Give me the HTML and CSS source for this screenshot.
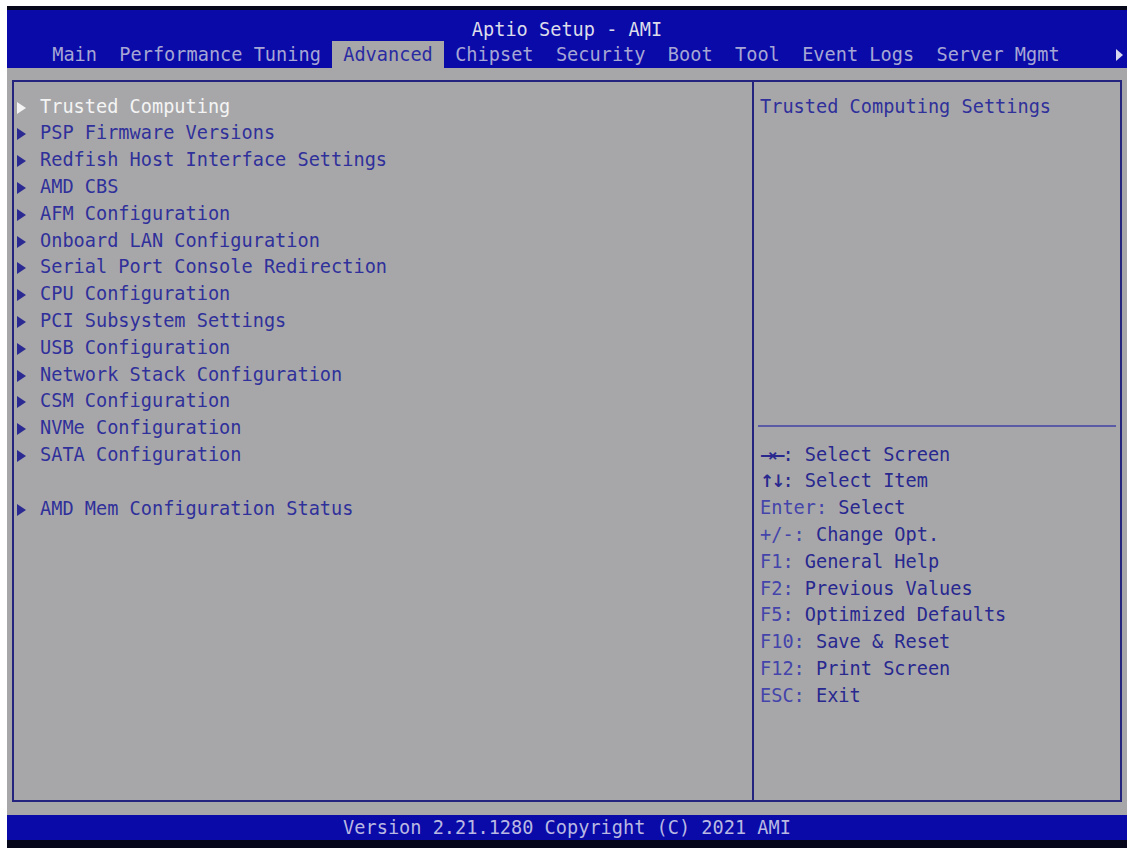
FILE: index.html
```html
<!DOCTYPE html>
<html>
<head>
    <meta charset="UTF-8">
    <title>Aptio Setup - AMI</title>
    <link rel="stylesheet" href="styles.css">
</head>
<body>
<div class="screen">
    <div class="topbar">
        <div class="title">Aptio Setup - AMI</div>
        <div class="tabs">
            <span class="tab">Main</span>
            <span class="tab">Performance Tuning</span>
            <span class="tab active">Advanced</span>
            <span class="tab">Chipset</span>
            <span class="tab">Security</span>
            <span class="tab">Boot</span>
            <span class="tab">Tool</span>
            <span class="tab">Event Logs</span>
            <span class="tab">Server Mgmt</span>
            <span class="more"></span>
        </div>
    </div>
    <div class="content">
        <div class="panel">
            <ul class="menu">
                <li class="item selected">Trusted Computing</li>
                <li class="item">PSP Firmware Versions</li>
                <li class="item">Redfish Host Interface Settings</li>
                <li class="item">AMD CBS</li>
                <li class="item">AFM Configuration</li>
                <li class="item">Onboard LAN Configuration</li>
                <li class="item">Serial Port Console Redirection</li>
                <li class="item">CPU Configuration</li>
                <li class="item">PCI Subsystem Settings</li>
                <li class="item">USB Configuration</li>
                <li class="item">Network Stack Configuration</li>
                <li class="item">CSM Configuration</li>
                <li class="item">NVMe Configuration</li>
                <li class="item">SATA Configuration</li>
                <li class="blank"></li>
                <li class="item">AMD Mem Configuration Status</li>
            </ul>
            <div class="side">
                <div class="desc">Trusted Computing Settings</div>
                <div class="sep"></div>
                <ul class="help">
                    <li><span class="arr">→←</span>: Select Screen</li>
                    <li><span class="arr">↑↓</span>: Select Item</li>
                    <li><span class="key">Enter:</span> Select</li>
                    <li><span class="key">+/-:</span> Change Opt.</li>
                    <li><span class="key">F1:</span> General Help</li>
                    <li><span class="key">F2:</span> Previous Values</li>
                    <li><span class="key">F5:</span> Optimized Defaults</li>
                    <li><span class="key">F10:</span> Save &amp; Reset</li>
                    <li><span class="key">F12:</span> Print Screen</li>
                    <li><span class="key">ESC:</span> Exit</li>
                </ul>
            </div>
        </div>
    </div>
    <div class="footer">Version 2.21.1280 Copyright (C) 2021 AMI</div>
</div>
</body>
</html>
```

FILE: styles.css
```css
body {
    margin: 0;
    background: #fff;
    font-family: "DejaVu Sans Mono", "Liberation Mono", monospace;
    font-size: 18.6px;
}
ul {
    margin: 0;
    padding: 0;
    list-style: none;
}
.screen {
    width: 1120px;
    margin: 6px 0 0 7px;
}
.topbar {
    background: #0a0aa8;
    border-top: 4px solid #07071c;
    height: 58px;
}
.title {
    height: 31px;
    line-height: 40px;
    text-align: center;
    color: #dcdcea;
}
.tabs {
    display: flex;
    height: 27px;
    line-height: 27px;
    padding-left: 34px;
}
.tab {
    padding: 0 11.2px;
    color: #a6a6d4;
}
.tab.active {
    background: #a7a7aa;
    color: #2a2aa2;
}
.more {
    margin-left: auto;
    margin-right: 4px;
    align-self: center;
    border-left: 7px solid #d6d6ee;
    border-top: 6px solid transparent;
    border-bottom: 6px solid transparent;
}
.content {
    background: #a7a7aa;
    padding: 12px 5px 13px 5px;
}
.panel {
    box-sizing: border-box;
    height: 722px;
    border: 2px solid #24247e;
    display: grid;
    grid-template-columns: 738px 1fr;
    color: #30309a;
    line-height: 26.8px;
}
.menu {
    padding: 11.6px 0 0 3px;
}
.item::before {
    content: "";
    display: inline-block;
    vertical-align: -1px;
    margin-right: 14px;
    border-left: 9px solid #2a2a92;
    border-top: 6px solid transparent;
    border-bottom: 6px solid transparent;
}
.item.selected {
    color: #f4f4f4;
}
.item.selected::before {
    border-left-color: #f4f4f4;
}
.blank {
    height: 26.8px;
}
.side {
    border-left: 2px solid #24247e;
    padding: 11.6px 4px 0 4px;
}
.desc {
    height: 331.4px;
    padding-left: 2px;
}
.sep {
    height: 2px;
    background: #5a5aa6;
}
.help {
    margin-top: 14.6px;
    padding-left: 2px;
    color: #28288f;
}
.key {
    color: #4444aa;
}
.arr {
    display: inline-block;
    width: 22.4px;
    font-family: "DejaVu Sans", sans-serif;
    font-weight: bold;
    font-size: 17px;
    letter-spacing: -3px;
}
.footer {
    background: #0a0aa8;
    height: 25px;
    line-height: 25px;
    border-bottom: 8px solid #07071c;
    text-align: center;
    color: #b8b8e2;
}
```
